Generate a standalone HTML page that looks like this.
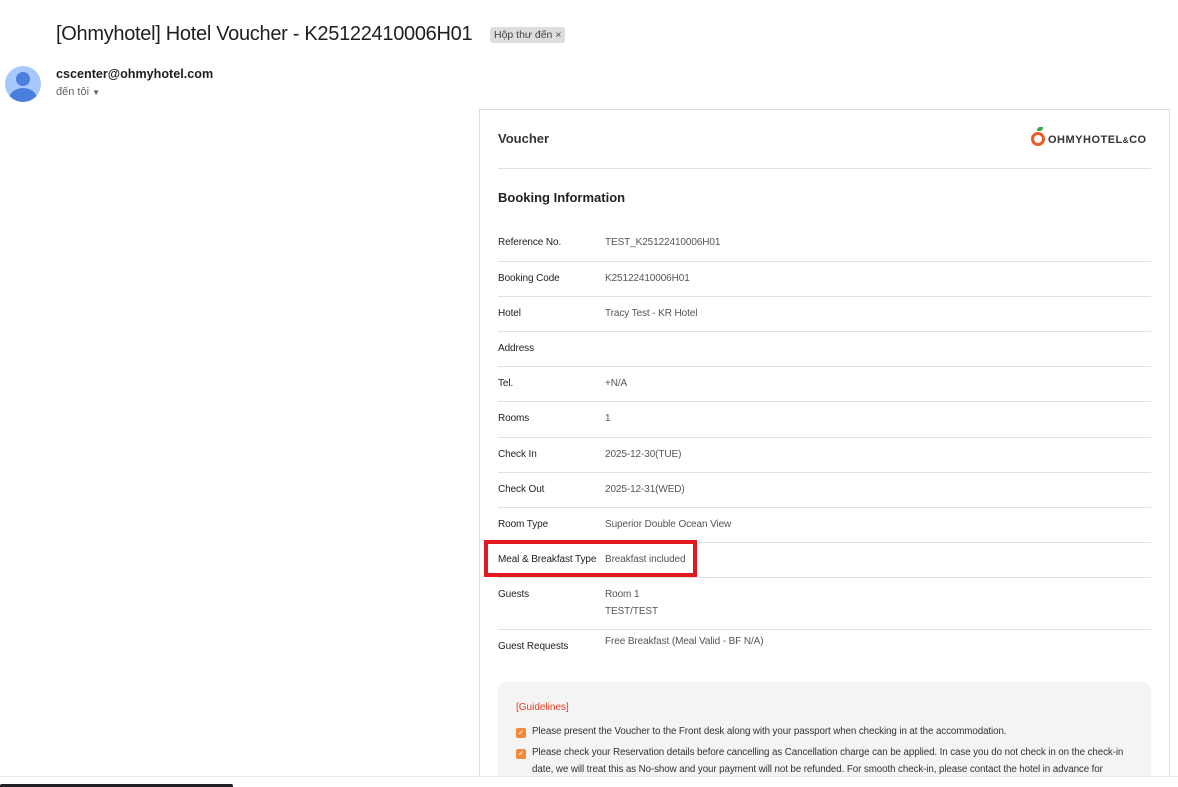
<!DOCTYPE html>
<html style="overflow:hidden;height:787px"><head><meta charset="utf-8"><style>
*{margin:0;padding:0;box-sizing:border-box}
html,body{overflow:hidden}
body{width:1178px;height:787px;background:#fff;font-family:"Liberation Sans",sans-serif;position:relative;color:#222}
.abs{position:absolute}
.title{left:56px;top:23px;font-size:20px;letter-spacing:-0.3px;color:#1f1f1f;white-space:nowrap}
.tag{left:490px;top:27px;background:#dddddd;color:#444;font-size:10.5px;padding:2px 4px;border-radius:3px}
.av{left:5px;top:66px;width:36px;height:36px;border-radius:50%;background:#a8c7fa;overflow:hidden}
.card{left:479px;top:109px;width:691px;height:690px;border:1px solid #dcdcdc;border-bottom:none}
.row{position:absolute;left:498px;width:653px;font-size:10px;color:#222;letter-spacing:-0.1px}
.row .k{position:absolute;left:0;white-space:nowrap}
.row .v{position:absolute;left:107px;color:#555;white-space:nowrap}
.line{position:absolute;left:498px;width:653px;height:1px;background:#e2e2e2}
.guide{left:498px;top:682px;width:653px;height:110px;background:#f4f4f4;border-radius:8px;overflow:hidden}
.chk{position:absolute;width:10px;height:10px;background:#f08a3c;border-radius:2px;color:#fff;font-size:8px;line-height:10px;text-align:center}
.gt{position:absolute;left:34px;font-size:9.8px;letter-spacing:-0.1px;color:#333;line-height:17px;width:600px}
</style></head><body>
<div class="abs title">[Ohmyhotel] Hotel Voucher - K25122410006H01</div>
<div class="abs tag">Hộp thư đến ×</div>
<div class="abs av"><div class="abs" style="left:11px;top:6px;width:14px;height:14px;border-radius:50%;background:#4a7fe0"></div><div class="abs" style="left:4px;top:22px;width:28px;height:22px;border-radius:50%;background:#4a7fe0"></div></div>
<div class="abs" style="left:56px;top:67px;font-size:12.6px;font-weight:bold;color:#1f1f1f">cscenter@ohmyhotel.com</div>
<div class="abs" style="left:56px;top:86px;font-size:11px;color:#5f6368">đến tôi <span style="font-size:8px">▼</span></div>

<div class="abs card"></div>
<div class="abs" style="left:498px;top:131px;font-size:13px;font-weight:bold;color:#333">Voucher</div>
<div class="abs" style="left:1031px;top:127px;width:14px;height:22px">
<div class="abs" style="left:0;top:5px;width:14px;height:14px;border-radius:50%;border:3px solid #ec5a24"></div>
<div class="abs" style="left:6px;top:0;width:6px;height:4px;background:#3aa84b;border-radius:3px 0"></div></div>
<div class="abs" style="left:1048px;top:134px;font-size:11px;font-weight:bold;color:#333;letter-spacing:0.5px">OHMYHOTEL<span style="font-size:8px">&amp;</span>CO</div>
<div class="line" style="top:168px"></div>
<div class="abs" style="left:498px;top:190px;font-size:13px;font-weight:bold;color:#222">Booking Information</div>

<div class="row" style="top:237px"><span class="k">Reference No.</span><span class="v">TEST_K25122410006H01</span></div>
<div class="line" style="top:261px"></div>
<div class="row" style="top:273px"><span class="k">Booking Code</span><span class="v">K25122410006H01</span></div>
<div class="line" style="top:296px"></div>
<div class="row" style="top:308px"><span class="k">Hotel</span><span class="v">Tracy Test - KR Hotel</span></div>
<div class="line" style="top:331px"></div>
<div class="row" style="top:343px"><span class="k">Address</span></div>
<div class="line" style="top:366px"></div>
<div class="row" style="top:378px"><span class="k">Tel.</span><span class="v">+N/A</span></div>
<div class="line" style="top:401px"></div>
<div class="row" style="top:413px"><span class="k">Rooms</span><span class="v">1</span></div>
<div class="line" style="top:437px"></div>
<div class="row" style="top:449px"><span class="k">Check In</span><span class="v">2025-12-30(TUE)</span></div>
<div class="line" style="top:472px"></div>
<div class="row" style="top:484px"><span class="k">Check Out</span><span class="v">2025-12-31(WED)</span></div>
<div class="line" style="top:507px"></div>
<div class="row" style="top:519px"><span class="k">Room Type</span><span class="v">Superior Double Ocean View</span></div>
<div class="line" style="top:542px"></div>
<div class="row" style="top:554px"><span class="k">Meal &amp; Breakfast Type</span><span class="v">Breakfast included</span></div>
<div class="line" style="top:577px"></div>
<div class="row" style="top:589px"><span class="k">Guests</span><span class="v">Room 1</span></div>
<div class="row" style="top:606px"><span class="v">TEST/TEST</span></div>
<div class="line" style="top:629px"></div>
<div class="row" style="top:636px"><span class="v">Free Breakfast (Meal Valid - BF N/A)</span></div>
<div class="row" style="top:641px"><span class="k">Guest Requests</span></div>

<div class="abs" style="left:484px;top:540px;width:213px;height:37px;border:4px solid #e3171f"></div>

<div class="abs guide">
<div class="abs" style="left:18px;top:20px;font-size:10px;color:#f03a1e">[Guidelines]</div>
<div class="chk" style="left:18px;top:46px">✓</div>
<div class="gt" style="top:41px;width:640px">Please present the Voucher to the Front desk along with your passport when checking in at the accommodation.</div>
<div class="chk" style="left:18px;top:67px">✓</div>
<div class="gt" style="top:62px;width:605px">Please check your Reservation details before cancelling as Cancellation charge can be applied. In case you do not check in on the check-in date, we will treat this as No-show and your payment will not be refunded. For smooth check-in, please contact the hotel in advance for</div>
</div>

<div class="abs" style="left:0;top:776px;width:1178px;height:11px;background:#fff;border-top:1px solid #e8e8e8;z-index:5"></div>
<div class="abs" style="left:0;top:784px;width:233px;height:3px;background:#202124;border-radius:2px 2px 0 0;z-index:6"></div>
</body></html>
